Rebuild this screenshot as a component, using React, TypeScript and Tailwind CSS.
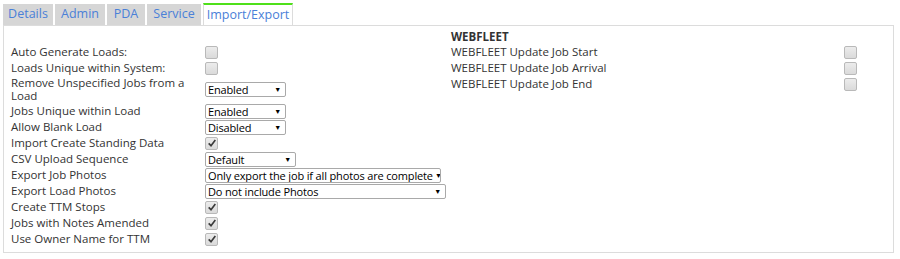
import React from "react";

const font = { fontFamily: '"Open Sans", "Noto Sans", sans-serif' };

function Check({ checked }: { checked?: boolean }) {
  return (
    <span className="flex h-[13px] w-[13px] shrink-0 items-center justify-center rounded-[2px] border border-[#b9b9b9] bg-gradient-to-b from-[#ececec] to-[#dadada]">
      {checked && (
        <svg viewBox="0 0 12 12" className="h-[10px] w-[10px]">
          <path d="M2 6.5 L4.8 9.2 L10 2.5" fill="none" stroke="#3a3a3a" strokeWidth="2" />
        </svg>
      )}
    </span>
  );
}

function Select({ value, w }: { value: string; w: string }) {
  return (
    <span
      className={`flex h-[15px] shrink-0 items-center justify-between overflow-hidden whitespace-nowrap rounded-[2px] border border-[#a9a9a9] bg-white pl-[2px] pr-[4px] text-[11px] leading-none tracking-[-0.15px] text-black ${w}`}
    >
      <span>{value}</span>
      <span className="pl-[2px] text-[7px]">▼</span>
    </span>
  );
}

type Row = { label: string; control: React.ReactNode };

const leftRows: Row[] = [
  { label: "Auto Generate Loads:", control: <Check /> },
  { label: "Loads Unique within System:", control: <Check /> },
  { label: "Remove Unspecified Jobs from a Load", control: <Select value="Enabled" w="w-[81px]" /> },
  { label: "Jobs Unique within Load", control: <Select value="Enabled" w="w-[81px]" /> },
  { label: "Allow Blank Load", control: <Select value="Disabled" w="w-[81px]" /> },
  { label: "Import Create Standing Data", control: <Check checked /> },
  { label: "CSV Upload Sequence", control: <Select value="Default" w="w-[91px]" /> },
  {
    label: "Export Job Photos",
    control: <Select value="Only export the job if all photos are complete" w="w-[236px]" />,
  },
  { label: "Export Load Photos", control: <Select value="Do not include Photos" w="w-[241px]" /> },
  { label: "Create TTM Stops", control: <Check checked /> },
  { label: "Jobs with Notes Amended", control: <Check checked /> },
  { label: "Use Owner Name for TTM", control: <Check checked /> },
];

const rightRows = ["WEBFLEET Update Job Start", "WEBFLEET Update Job Arrival", "WEBFLEET Update Job End"];

const tabs = [
  { name: "Details", w: "w-[50px]" },
  { name: "Admin", w: "w-[50px]" },
  { name: "PDA", w: "w-[38px]" },
  { name: "Service", w: "w-[54px]" },
];

export default function App() {
  return (
    <div className="h-[259px] w-[900px] bg-white pl-[3px] pt-[4px] text-[11.5px] text-[#333]" style={font}>
      <div className="flex h-[21px] gap-[2px]">
        {tabs.map((t) => (
          <div
            key={t.name}
            className={`flex h-[21px] items-center justify-center bg-[#d6d6d6] text-[12.5px] text-[#4a80d8] ${t.w}`}
          >
            {t.name}
          </div>
        ))}
        <div className="relative z-10 -mt-[1px] flex h-[22px] w-[90px] items-center justify-center border-x border-t-[2px] border-x-[#dcdcdc] border-t-[#4fe01a] bg-white text-[12.5px] text-[#4a80d8]">
          Import/Export
        </div>
      </div>
      <div className="h-[228px] w-[891px] border border-[#dcdcdc] px-[7px] pt-[4px]">
        <div className="flex">
          <div className="w-[440px]">
            <div className="h-[14px]" />
            {leftRows.map((r) => (
              <div key={r.label} className="flex min-h-[16px] items-center">
                <div className="w-[194px] py-px pr-[6px] leading-[12.5px]">{r.label}</div>
                {r.control}
              </div>
            ))}
          </div>
          <div className="flex-1">
            <div className="flex h-[14px] items-center font-bold">WEBFLEET</div>
            {rightRows.map((l) => (
              <div key={l} className="flex h-[16px] items-center">
                <div className="w-[393px]">{l}</div>
                <Check />
              </div>
            ))}
          </div>
        </div>
      </div>
    </div>
  );
}
